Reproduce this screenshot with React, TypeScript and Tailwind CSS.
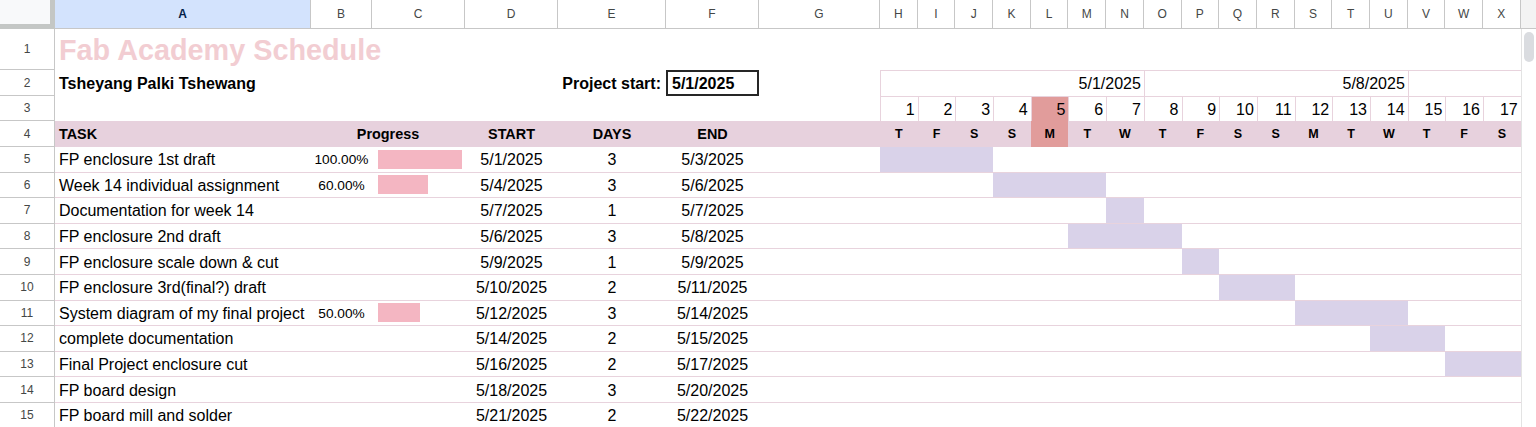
const dayCols = ["H", "I", "J", "K", "L", "M", "N", "O", "P", "Q", "R", "S", "T", "U", "V", "W", "X"];
const dayLetters = ["T", "F", "S", "S", "M", "T", "W", "T", "F", "S", "S", "M", "T", "W", "T", "F", "S"];

const fixedCols = [
	{ l: "A", w: "w-[256px]" },
	{ l: "B", w: "w-[61px]" },
	{ l: "C", w: "w-[93px]" },
	{ l: "D", w: "w-[93px]" },
	{ l: "E", w: "w-[108px]" },
	{ l: "F", w: "w-[93px]" },
	{ l: "G", w: "w-[121px]" },
];

type Task = { name: string; progress?: number; start: number; days: number; end: number };

const tasks: Task[] = [
	{ name: "FP enclosure 1st draft", progress: 1, start: 1, days: 3, end: 3 },
	{ name: "Week 14 individual assignment", progress: 0.6, start: 4, days: 3, end: 6 },
	{ name: "Documentation for week 14", start: 7, days: 1, end: 7 },
	{ name: "FP enclosure 2nd draft", start: 6, days: 3, end: 8 },
	{ name: "FP enclosure scale down & cut", start: 9, days: 1, end: 9 },
	{ name: "FP enclosure 3rd(final?) draft", start: 10, days: 2, end: 11 },
	{ name: "System diagram of my final project", progress: 0.5, start: 12, days: 3, end: 14 },
	{ name: "complete documentation", start: 14, days: 2, end: 15 },
	{ name: "Final Project enclosure cut", start: 16, days: 2, end: 17 },
	{ name: "FP board design", start: 18, days: 3, end: 20 },
	{ name: "FP board mill and solder", start: 21, days: 2, end: 22 },
];

const RowNum = ({ n }: { n: number }) => (
	<div className="w-[55px] shrink-0 flex items-center justify-center border-r border-b border-[#c7c7c7] text-[12px] text-[#444746]">
		{n}
	</div>
);

export default function App() {
	return (
		<div className="w-[1536px] h-[427px] overflow-hidden bg-white flex font-['Liberation_Sans',Arial,sans-serif] text-black">
			<div className="w-[1521px] shrink-0 flex flex-col">
				{/* column letters */}
				<div className="h-[29px] flex shrink-0">
					<div className="w-[55px] shrink-0 bg-[#f8f9fa] border-r-[5px] border-b-[5px] border-[#c4c7c5]" />
					{fixedCols.map((c) => (
						<div
							key={c.l}
							className={`${c.w} shrink-0 flex items-center justify-center border-r border-b border-[#c7c7c7] text-[12px] ${
								c.l === "A" ? "bg-[#d3e3fd] text-[#041e49] font-bold" : "text-[#444746]"
							}`}
						>
							{c.l}
						</div>
					))}
					{dayCols.map((l) => (
						<div
							key={l}
							className="w-[37.7px] shrink-0 flex items-center justify-center border-r border-b border-[#c7c7c7] text-[12px] text-[#444746]"
						>
							{l}
						</div>
					))}
				</div>

				{/* row 1: title */}
				<div className="h-[41px] flex shrink-0">
					<RowNum n={1} />
					<div className="flex-1 flex items-center pl-[4px] pt-[2px] text-[28.8px] font-bold text-[#f2cdd2] whitespace-nowrap leading-none">
						Fab Academy Schedule
					</div>
				</div>

				{/* row 2: name, project start, week dates */}
				<div className="h-[26px] flex shrink-0">
					<RowNum n={2} />
					<div className="w-[256px] shrink-0 flex items-center pl-[4px] pt-[1px] text-[16px] font-bold whitespace-nowrap leading-none">
						Tsheyang Palki Tshewang
					</div>
					<div className="w-[247px] shrink-0" />
					<div className="w-[108px] shrink-0 flex items-center justify-end pr-[5px] pt-[1px] text-[16px] font-bold whitespace-nowrap leading-none">
						Project start:
					</div>
					<div className="w-[93px] shrink-0 flex items-center pl-[4px] pt-[1px] border-2 border-[#262626] text-[16px] font-bold leading-none">
						5/1/2025
					</div>
					<div className="w-[121px] shrink-0" />
					<div className="w-[263.9px] shrink-0 flex items-center justify-end pr-[3px] pt-[1px] border-t border-l border-[#e8d3dd] text-[16px] leading-none">
						5/1/2025
					</div>
					<div className="w-[263.9px] shrink-0 flex items-center justify-end pr-[3px] pt-[1px] border-t border-l border-[#e8d3dd] text-[16px] leading-none">
						5/8/2025
					</div>
					<div className="w-[113.1px] shrink-0 border-t border-l border-[#e8d3dd]" />
				</div>

				{/* row 3: day numbers */}
				<div className="h-[25px] flex shrink-0">
					<RowNum n={3} />
					<div className="w-[825px] shrink-0" />
					{dayCols.map((l, i) => (
						<div
							key={l}
							className={`w-[37.7px] shrink-0 flex items-center justify-end pr-[3px] pt-[1px] border-t border-l border-[#e8d3dd] text-[16px] leading-none ${
								i === 4 ? "bg-[#e19c9b]" : ""
							}`}
						>
							{i + 1}
						</div>
					))}
				</div>

				{/* row 4: headers */}
				<div className="h-[26px] flex shrink-0">
					<RowNum n={4} />
					<div className="flex-1 flex bg-[#e7d1dd] text-[14.4px] font-bold leading-none">
						<div className="w-[256px] shrink-0 flex items-center pl-[4px]">TASK</div>
						<div className="w-[154px] shrink-0 flex items-center justify-center">Progress</div>
						<div className="w-[93px] shrink-0 flex items-center justify-center">START</div>
						<div className="w-[108px] shrink-0 flex items-center justify-center">DAYS</div>
						<div className="w-[93px] shrink-0 flex items-center justify-center">END</div>
						<div className="w-[121px] shrink-0" />
						{dayLetters.map((d, i) => (
							<div
								key={i}
								className={`w-[37.7px] shrink-0 flex items-center justify-center text-[12.5px] ${
									i === 4 ? "bg-[#e19c9b]" : ""
								}`}
							>
								{d}
							</div>
						))}
					</div>
				</div>

				{/* task rows */}
				{tasks.map((t, r) => (
					<div key={t.name} className="h-[25.6px] flex shrink-0">
						<RowNum n={r + 5} />
						<div className="flex-1 flex border-b border-[#e8d3dd] text-[16px] leading-none">
							<div className="w-[256px] shrink-0 flex items-center pl-[4px] pt-[2px] whitespace-nowrap">{t.name}</div>
							<div className="w-[61px] shrink-0 flex items-center justify-center pt-[1px] text-[13.7px]">
								{t.progress !== undefined ? `${(t.progress * 100).toFixed(2)}%` : ""}
							</div>
							<div className="w-[93px] shrink-0 flex items-center pl-[6px]">
								{t.progress !== undefined && (
									<div className="h-[19px] bg-[#f4b6c2]" style={{ width: `${t.progress * 84}px` }} />
								)}
							</div>
							<div className="w-[93px] shrink-0 flex items-center justify-center pt-[2px]">5/{t.start}/2025</div>
							<div className="w-[108px] shrink-0 flex items-center justify-center pt-[2px]">{t.days}</div>
							<div className="w-[93px] shrink-0 flex items-center justify-center pt-[2px]">5/{t.end}/2025</div>
							<div className="w-[121px] shrink-0" />
							{dayCols.map((l, i) => {
								const day = i + 1;
								const on = day >= t.start && day <= t.end;
								return <div key={l} className={`w-[37.7px] shrink-0 ${on ? "bg-[#d9d2e9]" : ""}`} />;
							})}
						</div>
					</div>
				))}
			</div>

			{/* vertical scrollbar */}
			<div className="w-[15px] shrink-0 flex flex-col">
				<div className="h-[29px] shrink-0 bg-[#f3f3f3] border-b border-[#c7c7c7]" />
				<div className="flex-1 border-l border-[#e3e3e3] pl-[2px] pt-[3px]">
					<div className="w-[10px] h-[30px] rounded-full bg-[#dadce0]" />
				</div>
			</div>
		</div>
	);
}
